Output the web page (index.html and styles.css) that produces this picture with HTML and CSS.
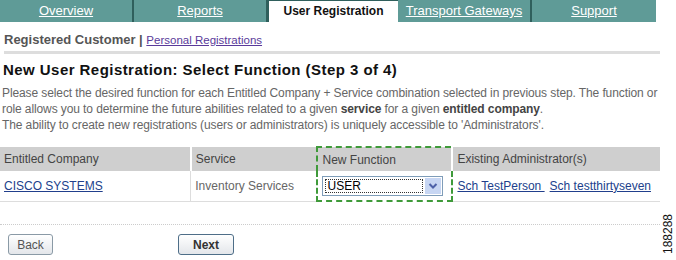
FILE: index.html
```html
<html>
	<head>
		<link rel="stylesheet" href="styles.css">
	</head>
	<body>
		<div id="page">
			<div class="tabs">
				<a class="tab" href="#">Overview</a>
				<a class="tab" href="#">Reports</a>
				<span class="tab active">User Registration</span>
				<a class="tab" href="#">Transport Gateways</a>
				<a class="tab" href="#">Support</a>
			</div>
			<div class="subnav">
				Registered Customer | <a href="#">Personal Registrations</a>
			</div>
			<h1>New User Registration: Select Function (Step 3 of 4)</h1>
			<p class="intro">
				Please select the desired function for each Entitled Company + Service combination selected in previous step. The function or<br/>
				role allows you to determine the future abilities related to a given <b>service</b> for a given <b>entitled company</b>.<br/>
				The ability to create new registrations (users or administrators) is uniquely accessible to 'Administrators'.
			</p>
			<table class="grid">
				<tr>
					<th class="c1">Entitled Company</th>
					<th class="c2">Service</th>
					<th class="c3 hl">New Function</th>
					<th class="c4">Existing Administrator(s)</th>
				</tr>
				<tr>
					<td><a href="#">CISCO SYSTEMS</a></td>
					<td>Inventory Services</td>
					<td class="hl">
						<div class="select">
							<span class="val">USER</span>
							<span class="arrow">
								<svg width="10" height="8" viewBox="0 0 10 8"><path d="M1.5 2 L5 5.5 L8.5 2" fill="none" stroke="#4d61a8" stroke-width="2"/></svg>
							</span>
						</div>
					</td>
					<td><a href="#">Sch TestPerson </a> <a href="#">Sch testthirtyseven </a></td>
				</tr>
			</table>
			<div class="buttons">
				<button class="btn back">Back</button>
				<button class="btn next">Next</button>
			</div>
			<div class="figno">188288</div>
		</div>
	</body>
</html>
```

FILE: styles.css
```css
body {
	margin: 0;
	background: #fff;
	font-family: "Liberation Sans", Arial, sans-serif;
	font-size: 12px;
	color: #666;
}
#page {
	width: 660px;
	position: relative;
}
.tabs {
	display: flex;
	height: 22px;
}
.tab {
	flex: 0 0 134px;
	box-sizing: border-box;
	background: #5f9b97;
	color: #fff;
	text-align: center;
	font-size: 13px;
	line-height: 22px;
	border-right: 2px solid #2f5f5c;
}
.tab:nth-child(5) {
	flex-basis: 124px;
	border-right: 0;
}
.tab.active {
	flex-basis: 130px;
	background: #fff;
	color: #111;
	font-size: 12px;
	font-weight: bold;
	border: 1px solid #2f5f5c;
	border-bottom: 0;
	border-right: 0;
	line-height: 20px;
}
.subnav {
	margin: 10px 0 0 4px;
	font-size: 13px;
	font-weight: bold;
	color: #555;
	padding-bottom: 4px;
	border-bottom: 3px solid #ddd;
	width: 656px;
}
.subnav a {
	font-weight: normal;
	font-size: 11.5px;
	color: #5a3a9a;
}
h1 {
	font-size: 15px;
	color: #111;
	margin: 7px 0 0 3px;
	letter-spacing: 0.45px;
}
.intro {
	margin: 7px 0 0 2px;
	line-height: 16px;
	color: #666;
	font-size: 12px;
	letter-spacing: -0.1px;
	white-space: nowrap;
}
.intro b {
	color: #444;
}
.grid {
	margin-top: 13px;
	width: 660px;
	border-collapse: collapse;
	font-size: 12px;
}
.grid th {
	background: #cfcfcf;
	text-align: left;
	font-weight: normal;
	color: #444;
	height: 24px;
	padding: 0 4px;
	border-left: 2px solid #fff;
}
.grid th.c1 {
	border-left: 0;
	width: 183px;
}
.grid th.c2 {
	width: 117px;
}
.grid th.c3 {
	width: 125px;
}
.grid td {
	height: 30px;
	padding: 0 4px;
	border-left: 1px solid #ddd;
	border-bottom: 1px solid #ddd;
	color: #666;
	white-space: nowrap;
}
.grid td:first-child {
	border-left: 0;
}
.grid a {
	color: #213f8c;
	margin-right: 5px;
}
.grid .hl {
	border-left: 2px dashed #3f9a3a;
	border-right: 2px dashed #3f9a3a;
}
.grid th.hl {
	border-top: 2px dashed #3f9a3a;
}
.grid td.hl {
	border-bottom: 2px dashed #3f9a3a;
}
.select {
	display: flex;
	align-items: center;
	width: 119px;
	height: 18px;
	border: 1px solid #7f9db9;
	background: #fff;
}
.select .val {
	flex: 1;
	margin: 2px;
	padding-left: 1px;
	border: 1px dotted #333;
	line-height: 12px;
	color: #000;
}
.select .arrow {
	width: 16px;
	height: 16px;
	background: #c7d6f3;
	display: flex;
	align-items: center;
	justify-content: center;
	margin-right: 1px;
}
.buttons {
	margin-top: 22px;
	padding-top: 9px;
	border-top: 1px dotted #ccc;
	display: flex;
	padding-left: 8px;
	gap: 125px;
}
.btn {
	font-family: "Liberation Sans", Arial, sans-serif;
	height: 21px;
	border: 1px solid #8a9aa6;
	border-radius: 3px;
	background: linear-gradient(#fff, #e3e6ea);
	font-size: 12px;
	color: #555;
}
.btn.back {
	width: 45px;
}
.btn.next {
	width: 56px;
	font-weight: bold;
	color: #333;
	border-color: #4e6e88;
}
.figno {
	position: absolute;
	left: 661px;
	top: 214px;
	writing-mode: vertical-rl;
	transform: rotate(180deg);
	font-size: 12px;
	color: #111;
}
```
